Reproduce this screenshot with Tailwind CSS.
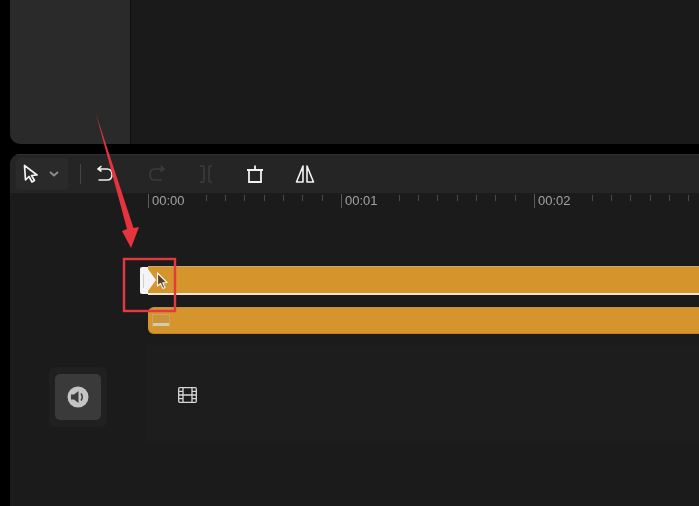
<!DOCTYPE html>
<html lang="en">
<head>
  <meta charset="UTF-8">
  <title>Timeline</title>
  <script src="https://cdn.jsdelivr.net/npm/@tailwindcss/browser@4"></script>
</head>
<body class="bg-black w-[699px] h-[506px] overflow-hidden relative blur-[0.4px] font-['Liberation_Sans',sans-serif]">

  <!-- top panels -->
  <div class="ml-[10px] h-[144px] flex rounded-bl-[10px] overflow-hidden">
    <div class="w-[120px] bg-[#2a2a2b]"></div>
    <div class="w-px bg-[#0e0e0f]"></div>
    <div class="flex-1 bg-[#1a1a1b]"></div>
  </div>

  <!-- timeline panel -->
  <div class="ml-[10px] mt-[10px] h-[352px] bg-[#1b1b1c] rounded-tl-[10px] overflow-hidden">
    <!-- toolbar -->
    <div class="h-[39px] bg-[#252526] border-t border-[#2f2f30] flex items-center text-white">
      <div class="ml-[6px] w-[52px] h-[32px] bg-[#2a2a2b] rounded flex items-center">
        <svg class="ml-[6px]" width="18" height="20" viewBox="0 0 18 20" fill="none" stroke="#f0f0f0" stroke-width="1.7" stroke-linejoin="round"><path d="M2.5 1.5 L3.5 16 L7 12.5 L10 18 L12.5 16.5 L9.5 11.5 L15 11 Z"/></svg>
        <svg class="ml-[9px]" width="10" height="6" viewBox="0 0 10 6" fill="none" stroke="#8f8f8f" stroke-width="1.8"><path d="M1 1 L5 4.5 L9 1"/></svg>
      </div>
      <div class="ml-[12px] w-px h-[20px] bg-[#454546]"></div>
      <svg class="ml-[16px]" width="16" height="18" viewBox="0 0 16 18" fill="none" stroke="#eeeeee" stroke-width="1.6"><path d="M4.5 1 L1 4 L4.5 6.5 M1.5 4 H10 Q15 4 15 9.5 Q15 15 10 15 H1.5"/></svg>
      <svg class="ml-[36px]" width="16" height="18" viewBox="0 0 16 18" fill="none" stroke="#3c3c3d" stroke-width="1.6"><path d="M11.5 1 L15 4 L11.5 6.5 M14.5 4 H6 Q1 4 1 9.5 Q1 15 6 15 H13"/></svg>
      <svg class="ml-[34px]" width="14" height="20" viewBox="0 0 14 20" fill="none" stroke="#3b3b3c" stroke-width="1.6"><path d="M5 2 H1 M5 18 H1 M5 2 V18 M10 2 V18 M10 2 H13 M10 18 H13"/></svg>
      <svg class="ml-[33px]" width="18" height="20" viewBox="0 0 18 20" fill="none" stroke="#f2f2f2" stroke-width="1.8"><path d="M3 6 H15 V18 H3 Z M1 6 H17 M9 1.5 V6"/></svg>
      <svg class="ml-[31px]" width="20" height="20" viewBox="0 0 20 20" fill="none" stroke="#f2f2f2" stroke-width="1.6" stroke-linejoin="round"><path d="M8 2 V18 H1.5 Z M12 2 V18 H18.5 Z"/></svg>
    </div>

    <!-- ruler -->
    <div id="ruler" class="h-[20px] flex pl-[138px] mt-px"></div>

    <!-- tracks -->
    <div class="pl-[138px] mt-[52px]">
      <div class="relative h-[29px] bg-[#d5952c] border-t border-t-[#c9a878] border-b-2 border-b-[#efe6d6]">
        <div class="absolute left-[-8px] top-0 h-[27px] w-[8px] bg-[#f4f4f4] rounded-l-[2px] flex items-center pl-[3px]">
          <div class="w-px h-[14px] bg-[#d0d0d0]"></div>
        </div>
        <svg class="absolute left-0 top-[2px]" width="8" height="22" viewBox="0 0 8 22"><path d="M0 0 L8 11 L0 22 Z" fill="#f4f4f4"/></svg>
      </div>
      <div class="mt-[12px] h-[27px] bg-[#d5952c] rounded-l-[6px] border-t border-[#b9944f] border-b border-b-[#c5801f] flex items-center pl-[4px]">
        <div class="w-[18px] h-[13px] bg-[#c8953e] border-t border-x border-[#d2a45a] flex items-end pb-px">
          <div class="w-full h-[3px] bg-[#d8c9a8]"></div>
        </div>
      </div>
    </div>

    <div class="mt-[11px] flex">
      <div class="w-[136px] pt-[22px] pl-[39px]">
        <div class="w-[58px] h-[60px] bg-[#202021] rounded-md flex items-center justify-center">
          <div class="w-[46px] h-[46px] bg-[#3a3a3b] rounded-[5px] flex items-center justify-center">
            <svg width="22" height="22" viewBox="0 0 22 22"><circle cx="11" cy="11" r="10.5" fill="#c4c4c4"/><path d="M4 8.5 H7 L11.5 5 V17 L7 13.5 H4 Z" fill="#3e3e3f"/><path d="M14 7.5 Q16.5 11 14 14.5" fill="none" stroke="#3e3e3f" stroke-width="1.5"/></svg>
          </div>
        </div>
      </div>
      <div class="flex-1 h-[98px] bg-[#1d1d1e] flex items-center pl-[32px] pt-[2px]">
        <svg width="19" height="16" viewBox="0 0 19 16" fill="none" stroke="#d8d8d8" stroke-width="1.3"><rect x="0.7" y="0.7" width="17.6" height="14.6" rx="1"/><path d="M5 0.7 V15.3 M14 0.7 V15.3 M5 8 H14 M0.7 4.4 H5 M0.7 8 H5 M0.7 11.6 H5 M14 4.4 H18.3 M14 8 H18.3 M14 11.6 H18.3"/></svg>
      </div>
    </div>
  </div>

  <!-- annotation and cursor over the timeline -->
  <svg class="absolute left-0 top-0" width="699" height="506" viewBox="0 0 699 506" fill="none">
    <path d="M157.5 273 V286 L160.5 283.5 L163 288.5 L165 287.5 L162.8 282.8 L167 282.5 Z" fill="#5a4426" stroke="#f2f2f2" stroke-width="1.2" stroke-linejoin="round"/>
    <rect x="124" y="259" width="51" height="52" stroke="#e5383f" stroke-width="2.4"/>
    <path d="M96 114 L127 229 L122 231 L131 248 L139 227 L133.5 228 Z" fill="#e6343f"/>
  </svg>

  <script>
    const ruler = document.getElementById("ruler");
    ["00:00", "00:01", "00:02"].forEach(label => {
      const sec = document.createElement("div");
      sec.className = "flex w-[193px] shrink-0";
      let cells = `<div class="w-[57.9px] shrink-0 flex h-[15px]"><div class="w-px h-[14px] bg-[#5a5a5b]"></div><span class="ml-[3px] text-[13px] leading-[14px] text-[#a2a2a2]">${label}</span></div>`;
      for (let i = 0; i < 7; i++) {
        cells += `<div class="w-[19.3px] shrink-0"><div class="w-px h-[6px] mt-px bg-[#4a4a4b]"></div></div>`;
      }
      sec.innerHTML = cells;
      ruler.appendChild(sec);
    });
  </script>
</body>
</html>
